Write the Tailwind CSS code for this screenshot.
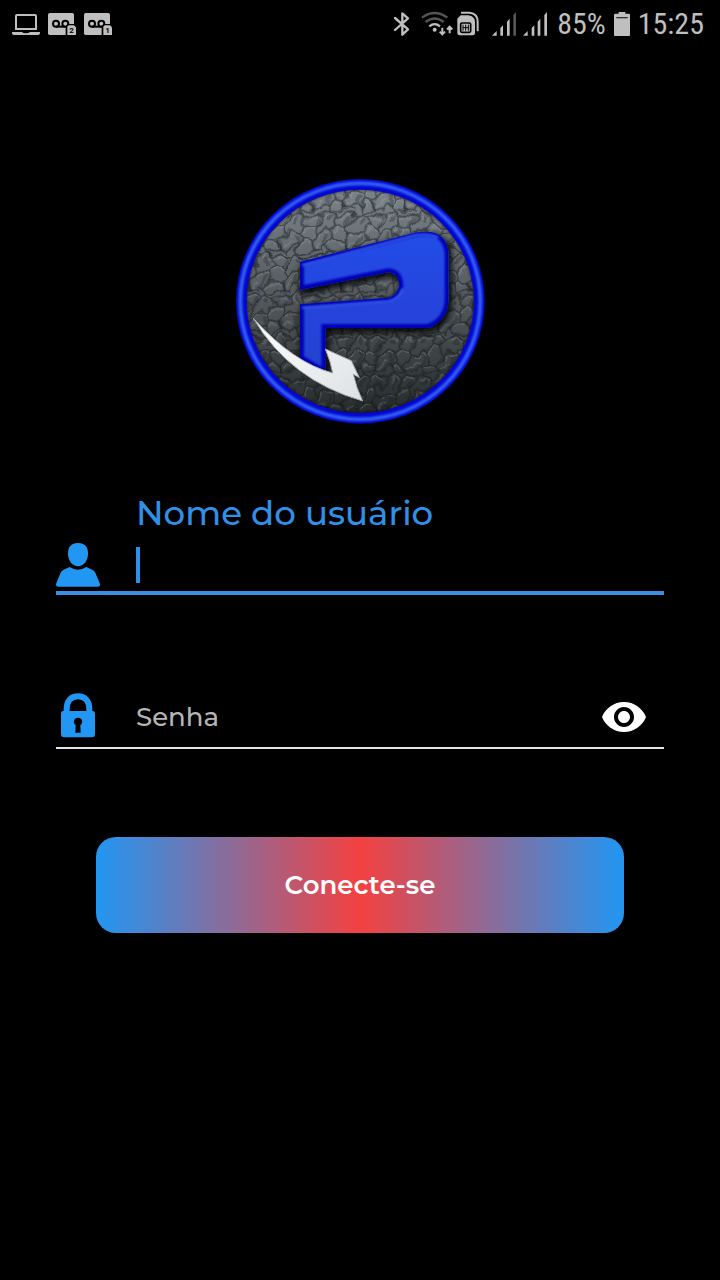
<!DOCTYPE html>
<html lang="pt-BR">
<head>
<meta charset="utf-8">
<meta name="viewport" content="width=device-width, initial-scale=1">
<title>Conecte-se</title>
<script src="https://cdn.jsdelivr.net/npm/@tailwindcss/browser@4"></script>
</head>
<body class="min-h-screen bg-black font-['Montserrat','Inter',sans-serif] text-white">
<header class="flex h-12 items-center justify-between pl-3 pr-4 text-[#bfbfbf]">
  <div class="flex items-center gap-2">
    <svg class="h-7 w-7" viewBox="0 0 84 84" fill="currentColor" aria-label="Computador"><path fill-rule="evenodd" d="M15 12h54q6 0 6 6v42H9V18q0-6 6-6zm0 6v36h54V18z"/><path d="M0 66h30q3 4 12 4t12-4h30v3q0 6-6 6H6q-6 0-6-6z"/></svg>
    <svg class="h-7 w-7" viewBox="0 0 84 84" aria-label="Correio de voz 2"><rect y="9" width="78" height="66" rx="5" fill="currentColor"/><g fill="none" stroke="#000" stroke-width="6"><circle cx="24" cy="41" r="9"/><circle cx="52" cy="41" r="9"/><path d="M24 50h28"/></g><path d="M59 42h20l8 8v28H53V48z" fill="#000"/><path d="M62 46h16l6 6v23H58V50z" fill="currentColor"/><text x="64" y="70" font-family="Roboto" font-weight="700" font-size="24" fill="#000">2</text></svg>
    <svg class="h-7 w-7" viewBox="0 0 84 84" aria-label="Correio de voz 1"><rect y="9" width="78" height="66" rx="5" fill="currentColor"/><g fill="none" stroke="#000" stroke-width="6"><circle cx="24" cy="41" r="9"/><circle cx="52" cy="41" r="9"/><path d="M24 50h28"/></g><path d="M59 42h20l8 8v28H53V48z" fill="#000"/><path d="M62 46h16l6 6v23H58V50z" fill="currentColor"/><text x="64" y="70" font-family="Roboto" font-weight="700" font-size="24" fill="#000">1</text></svg>
  </div>
  <div class="flex items-center gap-2">
    <svg class="h-12 w-40" viewBox="0 0 480 144" overflow="visible" aria-label="Bluetooth, Wi-Fi, cartão SIM e sinal">
      <path d="M30 54l39 34-17 16V40l17 15-39 35" fill="none" stroke="currentColor" stroke-width="7" stroke-linejoin="round" stroke-linecap="round"/>
      <g fill="none" stroke-width="7"><path d="M111 53q38-28 76 0M122 66q27-21 54 0" stroke="#555"/><path d="M133 79q16-13 32 0" stroke="currentColor"/></g>
      <circle cx="149" cy="89" r="6" fill="currentColor"/>
      <path d="M172 83v20m-8-8l8 8 8-8M194 100V80m-8 8l8-8 8 8" fill="none" stroke="currentColor" stroke-width="6"/>
      <path d="M228 38h26q24 3 24 27v29" fill="none" stroke="currentColor" stroke-width="6"/>
      <path d="M227 46h23q20 3 20 20v33q0 7-7 7h-39q-7 0-7-7V56z" fill="currentColor"/>
      <rect x="227" y="69" width="30" height="28" rx="4" fill="none" stroke="#000" stroke-width="5"/><path d="M234 74v18m8-18v18m8-18v18m-16-9h16" fill="none" stroke="#000" stroke-width="3"/>
      <g fill="currentColor"><path d="M321 107l14-14v14zM346 84l8-8v31h-8zM366 65l8-9v51h-8z"/><path d="M385 45l8-9v71h-8z" fill="#555"/><path d="M414 107l14-14v14zM440 84l8-8v31h-8zM458 65l8-9v51h-8zM478 45l8-9v71h-8z"/></g>
    </svg>
    <span class="ml-1 font-['Roboto_Condensed','Roboto',sans-serif] text-[30px] leading-8">85%</span>
    <svg class="h-6 w-4" viewBox="0 0 48 72" aria-label="Bateria"><path d="M14 0h20v5h10q4 0 4 4v60q0 3-3 3H3q-3 0-3-3V9q0-4 4-4h10z" fill="currentColor"/><path d="M7 17h34" stroke="#333" stroke-width="4"/></svg>
    <time class="font-['Roboto_Condensed','Roboto',sans-serif] text-[30px] leading-8">15:25</time>
  </div>
</header>
<main class="pt-31">
  <svg class="mx-auto w-65" viewBox="0 0 780 780" role="img" aria-label="P">
    <defs>
      <linearGradient id="shade" x1="0" y1="0" x2="0" y2="1"><stop offset="0" stop-color="#7d868c"/><stop offset=".45" stop-color="#565c60"/><stop offset="1" stop-color="#25292a"/></linearGradient>
      <linearGradient id="blue" x1="0" y1="0" x2="0" y2="1"><stop offset="0" stop-color="#214de9"/><stop offset=".5" stop-color="#2644dc"/><stop offset="1" stop-color="#2343cf"/></linearGradient>
      <linearGradient id="white" x1="0" y1="0" x2="1" y2="1"><stop offset="0" stop-color="#fff"/><stop offset="1" stop-color="#dde1e3"/></linearGradient>
      <filter id="s2"><feGaussianBlur stdDeviation="2"/></filter>
      <filter id="s3"><feGaussianBlur stdDeviation="3"/></filter>
      <filter id="s9" x="-20%" y="-20%" width="140%" height="140%"><feGaussianBlur stdDeviation="10"/></filter>
      <filter id="rough"><feTurbulence type="fractalNoise" baseFrequency=".022" numOctaves="2" seed="4"/><feDisplacementMap in="SourceGraphic" scale="45" xChannelSelector="R" yChannelSelector="G"/><feGaussianBlur stdDeviation="2"/></filter>
      <clipPath id="disc"><ellipse cx="391" cy="388" rx="355" ry="350"/></clipPath>
      <pattern id="skin" width="118" height="152" patternUnits="userSpaceOnUse" patternTransform="scale(.8)">
        <g fill="none" stroke="#14181a" stroke-opacity=".5" stroke-width="7" stroke-linejoin="round">
          <path d="M0 18l20-16 24 14 8 32-22 24-30-9M44 16l32-14 42 16M52 48l32 8 20-24 14-14M84 56l5 31-24 22-31-7-4-30M89 87l29-24M34 102L14 128l-14-8M65 109l10 31 29 0 14-20M75 140L20 152M104 140l4 12M14 128l8 24"/>
        </g>
        <g fill="none" stroke="#14181a" stroke-opacity=".3" stroke-width="14"><path d="M100 10l-18 40M16 80l-6 45M70 108l6 38M30 5l-10 34"/></g>
        <g fill="none" stroke="#b6bec3" stroke-opacity=".25" stroke-width="5"><path d="M6 26l18-14 13 10M58 22l19-10 22 11M38 78l20-22 19 7M5 74l19 7M24 126l15-15 18 6M84 130l20-22 10 2M97 91l14-14"/></g>
      </pattern>
      <path id="letter" fill-rule="evenodd" d="M210 270L555 182Q650 165 656 245V380Q655 445 595 468H286V605L210 560V397L465 378Q496 379 508 345Q508 304 475 301L210 354Z"/>
      <clipPath id="clip"><use href="#letter"/></clipPath>
    </defs>
    <ellipse cx="391" cy="388" rx="355" ry="350" fill="url(#shade)"/>
    <g clip-path="url(#disc)"><rect width="780" height="780" fill="url(#skin)" filter="url(#rough)"/></g>
    <ellipse cx="391" cy="388" rx="343" ry="337" fill="none" stroke="#000" stroke-opacity=".5" stroke-width="8" filter="url(#s3)"/>
    <ellipse cx="391" cy="388" rx="357" ry="351" fill="none" stroke="#0506cf" stroke-width="32"/>
    <ellipse cx="391" cy="388" rx="360" ry="354" fill="none" stroke="#3264f4" stroke-width="11" filter="url(#s3)"/>
    <use href="#letter" x="6" y="9" fill="#000" stroke="#000" stroke-width="8" opacity=".9" filter="url(#s9)"/>
    <use href="#letter" fill="url(#blue)"/>
    <g clip-path="url(#clip)">
      <use href="#letter" fill="none" stroke="#0502b8" stroke-width="24" filter="url(#s3)"/>
      <path d="M216 280L555 190Q600 182 625 198M216 407L475 388Q508 382 518 350" fill="none" stroke="#3c6cf0" stroke-width="6" filter="url(#s3)"/>
    </g>
    <path d="M72 443Q195 572 308 605Q300 570 286 532L365 568L390 620L370 609Q381 650 399 690Q190 620 72 443Z" fill="#000" opacity=".6" filter="url(#s3)"/>
    <path d="M70 439Q190 572 308 603Q302 569 286 531L364 566L388 617L370 607Q379 648 398 687Q180 625 70 439Z" fill="url(#white)" stroke="#a5a9ac" stroke-width="3"/>
  </svg>
  <form class="px-14 pt-16" onsubmit="return false">
    <div class="flex items-end border-b-4 border-[#3c8fe0]">
      <svg class="mb-1 h-11 w-11 shrink-0" viewBox="0 0 132 132" fill="#2196f3" aria-hidden="true"><path d="M66 0c21 0 31 12 30 34-1 21-14 36-30 36S37 55 36 34C35 12 45 0 66 0z"/><path d="M41 72q25 16 50 0l18 8q6 3 9 9l14 34q1 8-7 8H7q-8 0-7-8l14-34q3-6 9-9z"/></svg>
      <div class="ml-9 flex-1">
        <label for="usuario" class="block text-[34px] font-medium leading-[34px] text-[#3090e8]">Nome do usuário</label>
        <div class="mt-[17px] mb-2 flex h-9 items-center">
          <span class="h-9 w-1 bg-[#3090e8]"></span>
          <input id="usuario" type="text" class="h-9 min-w-0 flex-1 bg-transparent pl-1 text-[26px] caret-transparent outline-none">
        </div>
      </div>
    </div>
    <div class="mt-[98px] flex items-center border-b-2 border-[#e4e4e4] pb-1.5">
      <svg class="h-12 w-11 shrink-0" viewBox="0 0 132 144" fill="#2196f3" aria-hidden="true"><path d="M32 66V49C32 22 46 10 66 10s34 12 34 39v17" fill="none" stroke="#2196f3" stroke-width="18"/><path fill-rule="evenodd" d="M22 54h88q7 0 7 8v61q0 10-9 10H24q-9 0-9-10V62q0-8 7-8zM66 74a12 12 0 0 0-7 22l-1 23h16l-1-23a12 12 0 0 0-7-22z"/></svg>
      <div class="ml-9 grid flex-1 items-center">
        <label for="senha" class="col-start-1 row-start-1 text-[26px] font-medium leading-8 text-[#b5b5b5]">Senha</label>
        <input id="senha" type="password" class="col-start-1 row-start-1 h-12 w-full min-w-0 bg-transparent text-[26px] outline-none">
      </div>
      <button type="button" aria-label="Mostrar senha" class="mr-4 h-12 w-12"><svg class="h-12 w-12" viewBox="0 0 24 24" fill="#fff"><path d="M12 4.500C7 4.500 2.730 7.610 1 12c1.730 4.390 6 7.500 11 7.500s9.270-3.110 11-7.500c-1.730-4.390-6-7.500-11-7.500zM12 17c-2.760 0-5-2.240-5-5s2.240-5 5-5 5 2.240 5 5-2.240 5-5 5zm0-8c-1.660 0-3 1.340-3 3s1.340 3 3 3 3-1.340 3-3-1.340-3-3-3z"/></svg></button>
    </div>
    <div class="px-10 pt-22">
      <button type="submit" class="h-24 w-full rounded-[20px] bg-[linear-gradient(90deg,#2196f3,#f44141,#2196f3)] text-[26px] font-semibold">Conecte-se</button>
    </div>
  </form>
</main>
</body>
</html>
